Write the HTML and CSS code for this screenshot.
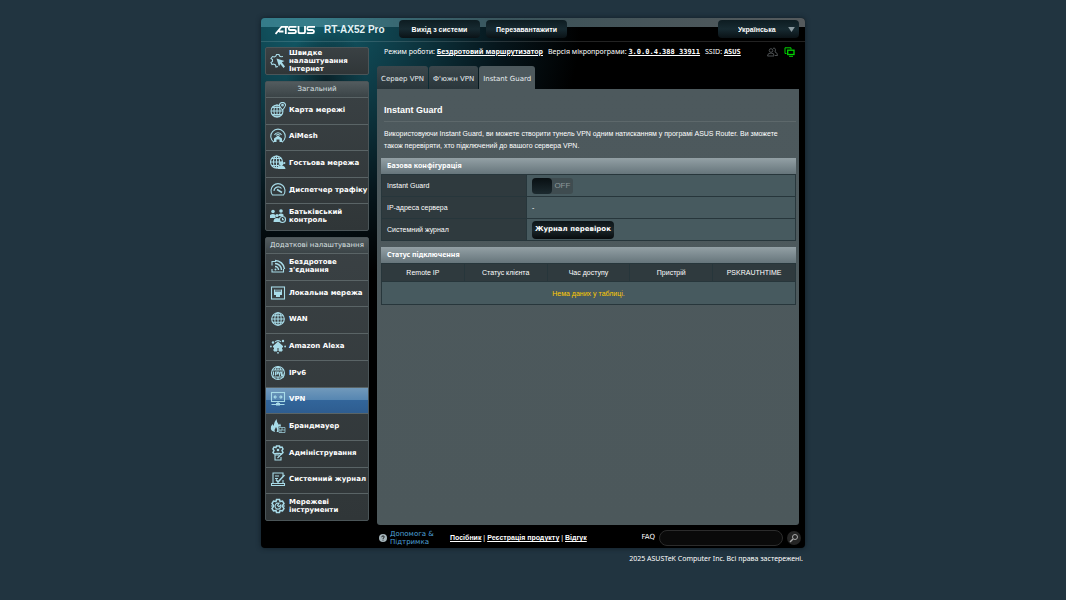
FILE: index.html
```html
<!DOCTYPE html>
<html lang="uk">
<head>
<meta charset="utf-8">
<title>RT-AX52 Pro - Instant Guard</title>
<link rel="stylesheet" href="styles.css">
</head>
<body>
<div class="page">
<div class="router">
  <header class="topbar">
    <div class="brand">
      <svg class="logo" viewBox="0 0 40 10" role="img" aria-label="ASUS" fill="none" stroke="#fff" stroke-width="1.8">
        <path d="M.5 9 6.500 1.900H13M4 6.500H8.500M10.800 1.500V9"/>
        <path d="M21.500 1.900H15Q13.800 1.900 13.800 3.400T15 5H19.500Q21 5 21 6.600T19.500 8.200H12.800"/>
        <path d="M23.500 1V6.500Q23.500 8.200 25 8.200H28.500Q30 8.200 30 6.500V1"/>
        <path d="M40 1.900H33.500Q32.300 1.900 32.300 3.400T33.500 5H37.500Q39 5 39 6.600T37.500 8.200H31.800"/>
      </svg>
      <span class="model">RT-AX52 Pro</span>
    </div>
    <button class="top-button" type="button">Вихід з системи</button>
    <button class="top-button" type="button">Перезавантажити</button>
    <div class="language">
      <select class="language-select" aria-label="Мова"><option>Українська</option></select>
      <svg class="language-arrow" viewBox="0 0 8 6"><path d="M0 0H8L4 6Z" fill="#8b9aa0"/></svg>
    </div>
  </header>

  <div class="columns">
    <nav class="sidebar">
      <a class="quick" href="#">
        <svg class="icon" viewBox="0 0 16 16"><path d="M8 13.500 6 14 5.500 12 3.500 11 2 11.500 1 9.500 2.500 8.500 2.500 6.500 1 5.500 2.500 3.500 4.500 4 6 3 6.500 1.500H9L9.500 3 11 3.700 13 3.500"/><path class="solid" d="M6.500 5.500 14.500 8 11.800 9.300 15 13.500 13.500 15 10.300 11 9 13.500Z"/></svg>
        <span>Швидке<br>налаштування<br>Інтернет</span>
      </a>

      <section class="menu">
        <h2 class="menu-title">Загальний</h2>
        <ul class="menu-list menu-general">
          <li><a class="menu-item" href="#"><svg class="icon" viewBox="0 0 16 16"><circle cx="7" cy="9" r="6"/><ellipse cx="7" cy="9" rx="3" ry="6"/><path d="M1 9H13M7 3V15M2 5.500H11M2 12.500H12"/><path class="cut" d="M12.500 8Q9 4 9.500 2.500A3.200 3.200 0 0 1 15.500 2.500Q16 4 12.500 8Z"/><circle cx="12.500" cy="3.200" r=".8"/></svg><span>Карта мережі</span></a></li>
          <li><a class="menu-item" href="#"><svg class="icon" viewBox="0 0 16 16"><path d="M4 14.300A7.200 7.200 0 1 1 12 14.300"/><path d="M4.500 7A3.800 3.800 0 0 1 11.500 7M6.300 7.500A1.900 1.900 0 0 1 9.700 7.500"/><path class="solid" d="M8 7.500 12 10.500V14H9.500V11.500H6.500V14H4V10.500Z"/></svg><span>AiMesh</span></a></li>
          <li><a class="menu-item" href="#"><svg class="icon" viewBox="0 0 16 16"><circle cx="6.500" cy="7" r="6"/><ellipse cx="6.500" cy="7" rx="3" ry="6"/><path d="M.5 7H12.500M6.500 1V13M2 3.500H11M2 10.500H9"/><circle class="solid" cx="11.500" cy="8.500" r="2"/><path class="solid" d="M7.500 14Q8 10.500 11.500 10.500T15.500 14Z"/><circle class="solid" cx="14.300" cy="8" r="1.100"/></svg><span>Гостьова мережа</span></a></li>
          <li><a class="menu-item" href="#"><svg class="icon" viewBox="0 0 16 16"><path d="M2.500 13A7 7 0 1 1 13.500 13Z"/><path d="M4 9A4.200 4.200 0 0 1 11.500 6.500"/><path class="thick" d="M7 7.500 12 10.500"/></svg><span>Диспетчер трафіку</span></a></li>
          <li><a class="menu-item" href="#"><svg class="icon" viewBox="0 0 16 16"><circle class="solid" cx="3" cy="3.500" r="1.800"/><circle class="solid" cx="11" cy="3" r="1.800"/><circle class="solid" cx="7" cy="7.500" r="1.600"/><path class="solid" d="M0 10V7Q3 5 5.500 7V10ZM8.500 8V6.500Q11 4.500 13.500 6.500V8ZM3.500 14Q3.500 10 7 10T10 14Z"/><circle class="cut" cx="12.500" cy="11.500" r="3"/><path d="M12.500 10V11.700H14"/></svg><span>Батьківський<br>контроль</span></a></li>
        </ul>
      </section>

      <section class="menu">
        <h2 class="menu-title">Додаткові налаштування</h2>
        <ul class="menu-list menu-advanced">
          <li><a class="menu-item" href="#"><svg class="icon" viewBox="0 0 16 16"><path d="M2 7.500V3.500H6M2 11V14H13.500V11"/><path class="thick" d="M5 5.500A6.500 6.500 0 0 1 11.500 12M5 2.500A9.500 9.500 0 0 1 14.500 11M5 8.500A3.500 3.500 0 0 1 8.500 12"/><circle class="solid" cx="5.500" cy="11.500" r="1"/></svg><span>Бездротове<br>з'єднання</span></a></li>
          <li><a class="menu-item" href="#"><svg class="icon" viewBox="0 0 16 16"><rect x="1.500" y="2" width="13" height="12"/><path class="solid" d="M4 4.500H5.500V7H6.500V4.500H7.500V7H8.500V4.500H9.500V7H10.500V4.500H12V10H10V12H6V10H4Z"/></svg><span>Локальна мережа</span></a></li>
          <li><a class="menu-item" href="#"><svg class="icon" viewBox="0 0 16 16"><circle cx="8" cy="8" r="6.300"/><ellipse cx="8" cy="8" rx="3.200" ry="6.300"/><path d="M1.700 8H14.300M8 1.700V14.300M3 4.700H13M3 11.300H13"/></svg><span>WAN</span></a></li>
          <li><a class="menu-item" href="#"><svg class="icon" viewBox="0 0 16 16"><path class="solid" d="M3 8 8 3.500 13 8V9.500H12V13.500H9V10.500H7V13.500H4V9.500H3Z"/><path d="M5 4A4 4 0 0 1 11 4M3 12H13"/><circle class="solid" cx=".9" cy="8.500" r=".9"/><circle class="solid" cx="15.100" cy="8.500" r=".9"/><circle class="solid" cx="3" cy="4.500" r="1.200"/><circle class="solid" cx="13" cy="3" r="1.200"/><circle class="solid" cx="8" cy="14.800" r=".9"/></svg><span>Amazon Alexa</span></a></li>
          <li><a class="menu-item" href="#"><svg class="icon" viewBox="0 0 16 16"><circle cx="8" cy="8" r="6.500"/><path d="M2 5H14M2 12H14M8 1.500V5M5 5Q5.500 2.500 8 1.500 10.500 2.500 11 5M8 12V14.500"/><path d="M3.500 6.500V10.500M5.500 10.500V7H7.500V9H5.500M8.500 6.500 9.500 10 10.500 6.500M13 7H11.500V10.500H13V9H11.500"/></svg><span>IPv6</span></a></li>
          <li><a class="menu-item active" href="#" aria-current="page"><svg class="icon" viewBox="0 0 16 16"><rect x="1.500" y="1.500" width="13" height="9"/><path d="M4 6H7M9 6H12M5.500 4.500 4 6 5.500 7.500M10.500 4.500 12 6 10.500 7.500M8 10.500V13M1.500 13.500H14.500"/><path class="solid" d="M6 12H10V14.500H6Z"/></svg><span>VPN</span></a></li>
          <li><a class="menu-item" href="#"><svg class="icon" viewBox="0 0 16 16"><path class="solid" d="M5 14Q0 13 1 8.500L2.500 6 3.500 8Q4 4 6.500 1 6.500 4 9 7L10 5.500Q11 7 11 8.500H8.500V14H6.500Q8 12 6 9 4 11.500 5 14Z"/><path class="thin" d="M9 9.500H15V14.500H9ZM9 12H15M12 9.500V12M11 12V14.500"/></svg><span>Брандмауер</span></a></li>
          <li><a class="menu-item" href="#"><svg class="icon" viewBox="0 0 16 16"><path class="thick" d="M6.500 1H9.500L10 2.500 12 2 13 4 12 5.500 13 7.500 11.500 9 9.500 8.500H6.500L4.500 9 3 7.500 4 5.500 3 4 4 2 6 2.500Z"/><circle class="solid" cx="8" cy="5" r="1.300"/><path d="M5 10H9M5 10V15H11V12M7.500 13 12 8.500"/></svg><span>Адміністрування</span></a></li>
          <li><a class="menu-item" href="#"><svg class="icon" viewBox="0 0 16 16"><path d="M3 12V2H13V5M13 9V12.500M1.500 12.500H14.500V14.500H1.500Z"/><path d="M5 5H9M5 7.500H8"/><path class="thick" d="M6 8.500 8 11 14.500 4"/></svg><span>Системний журнал</span></a></li>
          <li><a class="menu-item" href="#"><svg class="icon" viewBox="0 0 16 16"><path class="thick" d="M6.500 1.500H9.500L10 3.500 12.500 3 14 5.500 12.500 7.500V8.500L14 10.500 12.500 13 10 12.500 9.500 14.500H6.500L6 12.500 3.500 13 2 10.500 3.500 8.500V7.500L2 5.500 3.500 3 6 3.500Z"/><path d="M5.500 6.500A3 3 0 0 1 9 5.300L7.500 7.500 9 8.700 10.800 7A3 3 0 1 1 5.500 6.500M1 8H3M13 8H15"/></svg><span>Мережеві<br>інструменти</span></a></li>
        </ul>
      </section>
    </nav>

    <main class="main">
      <div class="status">
        <p class="status-text">
          <span>Режим роботи: <a href="#">Бездротовий маршрутизатор</a></span>
          <span>Версія мікропрограми: <a class="mono" href="#">3.0.0.4.388_33911</a></span>
          <span>SSID: <a class="mono" href="#">ASUS</a></span>
        </p>
        <svg class="status-icon" viewBox="0 0 11 10" fill="none" stroke="#4c5052"><circle cx="4" cy="3.500" r="1.800"/><path d="M.5 9Q.5 6 4 6T7 9ZM6 1.500Q7 .5 8 1.500T8 5Q10.500 5.500 10.500 8.500H8"/></svg>
        <svg class="status-icon" viewBox="0 0 11 10" fill="none" stroke="#00d400"><path d="M2.500 6.500H1V.8H7V2.500"/><rect x="3.700" y="3.200" width="6.300" height="4.300" stroke-width="1.300"/><path d="M5 9.300H9"/></svg>
      </div>
      <nav class="tabs">
        <a class="tab" href="#">Сервер VPN</a>
        <a class="tab" href="#">Ф'южн VPN</a>
        <a class="tab tab-active" href="#" aria-current="page">Instant Guard</a>
      </nav>
      <div class="panel">
        <h1 class="title">Instant Guard</h1>
        <p class="intro">Використовуючи Instant Guard, ви можете створити тунель VPN одним натисканням у програмі ASUS Router. Ви зможете також перевіряти, хто підключений до вашого сервера VPN.</p>

        <table class="grid config">
          <caption class="bar">Базова конфігурація</caption>
          <tbody>
            <tr><th scope="row"><label for="guard">Instant Guard</label></th><td><span class="switch"><input class="switch-input" type="checkbox" id="guard"><span class="switch-text">OFF</span></span></td></tr>
            <tr><th scope="row">IP-адреса сервера</th><td>-</td></tr>
            <tr><th scope="row">Системний журнал</th><td><button class="log-button" type="button">Журнал перевірок</button></td></tr>
          </tbody>
        </table>

        <table class="grid clients">
          <caption class="bar">Статус підключення</caption>
          <thead><tr><th scope="col">Remote IP</th><th scope="col">Статус клієнта</th><th scope="col">Час доступу</th><th scope="col">Пристрій</th><th scope="col">PSKRAUTHTIME</th></tr></thead>
          <tbody><tr><td class="empty" colspan="5">Нема даних у таблиці.</td></tr></tbody>
        </table>
      </div>
    </main>
  </div>

  <footer class="footer">
    <div class="support">
      <svg class="help" viewBox="0 0 8 8"><circle cx="4" cy="4" r="4" fill="#a4b4ba"/><path d="M2.700 3.200Q2.800 1.900 4 1.900T5.300 3Q5.300 3.700 4 4.400V5M4 5.700V6.600" fill="none" stroke="#111" stroke-width=".9"/></svg>
      <a class="support-link" href="#">Допомога &amp; Підтримка</a>
    </div>
    <p class="footer-links"><a href="#">Посібник</a> | <a href="#">Реєстрація продукту</a> | <a href="#">Відгук</a></p>
    <form class="faq">
      <label for="faq">FAQ</label>
      <input class="faq-input" id="faq" type="text">
      <button class="faq-button" type="button" aria-label="Пошук"><svg class="faq-icon" viewBox="0 0 10 10" fill="none" stroke="#aaa"><circle cx="6" cy="4" r="2.500"/><path d="M4 6 1 9" stroke-width="1.500"/></svg></button>
    </form>
  </footer>
</div>
<p class="copyright">2025 ASUSTeK Computer Inc. Всі права застережені.</p>
</div>
</body>
</html>
```
FILE: styles.css
```css
* { box-sizing: border-box; }
body {
  margin: 0;
  background: #213440;
  color: #fff;
  font: 7px/9px "DejaVu Sans", sans-serif;
}
h1, h2, p, ul { margin: 0; padding: 0; font: inherit; }
ul { list-style: none; }
a { color: inherit; }
button, select, input { font: inherit; color: inherit; margin: 0; }

.page { max-width: 544px; margin: 0 auto; padding: 18px 0; }
.router {
  border-radius: 4px;
  box-shadow: 0 0 5px #101c24;
  background:
    radial-gradient(ellipse 40px 60px at 65px 65px, #07171dcc, #07171d00),
    radial-gradient(ellipse 270px 260px at 50px 0, #12606e 0%, #0e3b46 35%, #06161c 70%, #000 100%) no-repeat,
    #000;
}

.topbar {
  display: flex;
  align-items: flex-start;
  gap: 6px;
  height: 24px;
  padding: 2px 6px 0 14px;
  border-bottom: 1px solid #ffffff22;
  border-radius: 4px 4px 0 0;
  background: linear-gradient(90deg, #4d9cab99, #48656dcc 45%, #555a5d) 0 0 / 100% 9px no-repeat;
}
.brand { display: flex; flex: 0 0 118px; align-items: center; gap: 9px; height: 19px; }
.logo { width: 40px; height: 10px; }
.model { font: bold 10px/12px "Liberation Sans", sans-serif; color: #e4f2f5; white-space: nowrap; }
.top-button, .language-select {
  width: 81px;
  height: 18px;
  border: 0;
  border-radius: 4px;
  background: linear-gradient(#0d1c21, #172a31 50%, #0a1216);
  font: bold 7px/9px "Liberation Sans", sans-serif;
}
.language { position: relative; margin-left: auto; }
.language-select { appearance: none; padding: 0 20px; }
.language-arrow { position: absolute; right: 4px; top: 7px; width: 7px; height: 5px; pointer-events: none; }

.columns { display: flex; gap: 8px; padding: 0 6px 0 4px; }
.sidebar { flex: 0 0 104px; display: flex; flex-direction: column; gap: 6px; padding: 5px 0 4px; }
.quick, .menu { border: 1px solid #4b5558; border-radius: 2px; background: linear-gradient(#3a4144, #303638); }
.quick, .menu-item {
  display: flex;
  align-items: center;
  gap: 3px;
  padding: 0 0 2px 4px;
  font: bold 7px/8px "DejaVu Sans", sans-serif;
  text-decoration: none;
  white-space: nowrap;
}
.quick { min-height: 28px; padding: 0 0 0 4px; }
.menu-title { padding: 3px 0; text-align: center; white-space: nowrap; background: linear-gradient(#525b5e, #3b4447); color: #dce2e4; }
.menu-list { display: grid; grid-auto-rows: 1fr; }
.menu-general { min-height: 133px; }
.menu-advanced { min-height: 267px; }
.menu-list li { display: grid; border-top: 1px solid #5a6466; }
.active { background: linear-gradient(#7199bb 0, #5787b2 46%, #32659a 50%, #2e5d90); }
.icon { flex: none; width: 16px; height: 16px; fill: none; stroke: #a8dbe8; stroke-width: 1.1; }
.icon .solid { fill: #a8dbe8; stroke: none; }
.icon .cut { fill: #343b3e; }
.icon .thick { stroke-width: 1.5; }
.icon .thin { stroke-width: .7; }

.main { flex: 1; min-width: 0; display: flex; flex-direction: column; }
.status { display: flex; align-items: center; gap: 6px; height: 20px; padding: 0 4px 0 7px; }
.status-text { flex: 1; display: flex; gap: 5px; white-space: nowrap; font-family: "Noto Sans", sans-serif; }
.status-text a { font-weight: bold; }
.status-text .mono { font-family: "DejaVu Sans Mono", monospace; }
.status-icon { width: 11px; height: 10px; }
.tabs { display: flex; gap: 1px; padding-top: 4px; }
.tab {
  padding: 9px 4px 5px;
  border-radius: 3px 3px 0 0;
  background: linear-gradient(#3b474c, #2a363b);
  color: #e8eef0;
  text-decoration: none;
}
.tab-active { background: #4d595d; }
.panel { flex: 1; padding: 15px 3px 0 4px; border-radius: 0 0 3px 3px; background: linear-gradient(#4d595d, #4c585b); font: 7px/12px "Liberation Sans", sans-serif; }
.title { margin-left: 3px; padding-bottom: 5px; border-bottom: 1px solid #5d686b; font-weight: bold; font-size: 9px; line-height: 12px; }
.intro { padding: 6px 3px; }

.grid { width: 100%; border-collapse: collapse; table-layout: fixed; margin-bottom: 6px; line-height: 9px; }
.bar { height: 16px; padding: 0 6px; background: linear-gradient(#93a0a5, #66757b); font: bold 7px/16px "Noto Sans", sans-serif; text-align: left; }
.grid th, .grid td { border: 1px solid #27363b; font-weight: normal; }
.grid th { background: #2f3a3e; }
.grid td { background: #475a5f; }
.config th { width: 35%; padding: 0 5px; text-align: left; }
.config td { height: 22px; padding: 0 5px; }
.clients th { height: 18px; padding: 0; }
.clients .empty { height: 23px; text-align: center; color: #fc0; }
.switch { display: flex; align-items: center; width: 41px; height: 16px; border-radius: 3px; background: #3f4c50; color: #8c979a; }
.switch-input { appearance: none; width: 20px; height: 16px; border-radius: 4px; background: linear-gradient(#080f12, #1c2a2f); }
.switch-text { flex: 1; text-align: center; font-size: 8px; }
.log-button { display: block; height: 18px; padding: 0 3px; border: 0; border-radius: 4px; background: linear-gradient(#0c1417, #1b262a 50%, #070b0d); font: bold 7px/9px "DejaVu Sans", sans-serif; }

.footer { display: flex; align-items: center; padding: 2px 4px 0 118px; min-height: 23px; }
.support { display: flex; align-items: center; gap: 3px; width: 71px; line-height: 8px; color: #4fa3da; }
.help { flex: none; width: 8px; height: 8px; }
.support-link { text-decoration: none; }
.footer-links { font: 7px/9px "Liberation Sans", sans-serif; white-space: nowrap; }
.footer-links a { font-weight: bold; }
.faq { display: flex; align-items: center; gap: 4px; margin-left: auto; }
.faq-input { width: 124px; height: 16px; border: 1px solid #2c2c2c; border-radius: 8px; background: #0a0a0a; }
.faq-button { display: grid; place-items: center; width: 14px; height: 14px; padding: 0; border: 0; border-radius: 7px; background: #252525; }
.faq-icon { width: 10px; height: 10px; }
.copyright { padding: 6px 2px 0; text-align: right; font-family: "Noto Sans", sans-serif; }
```
